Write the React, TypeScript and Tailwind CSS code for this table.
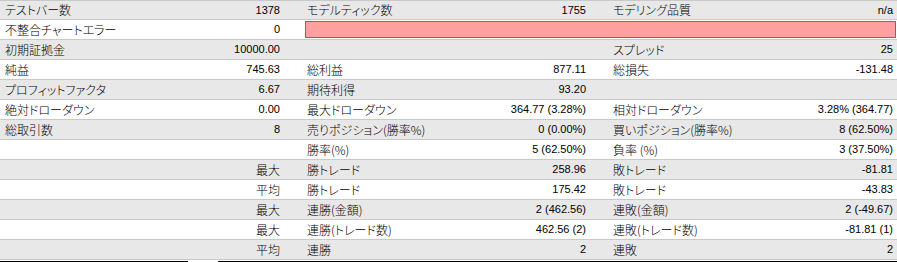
import React from "react";

type Row = {
  l1?: string;
  v1?: string;
  q?: string;
  l2?: string;
  v2?: string;
  l3?: string;
  v3?: string;
  pink?: boolean;
};

const rows: Row[] = [
  { l1: "テストバー数", v1: "1378", l2: "モデルティック数", v2: "1755", l3: "モデリング品質", v3: "n/a" },
  { l1: "不整合チャートエラー", v1: "0", pink: true },
  { l1: "初期証拠金", v1: "10000.00", l3: "スプレッド", v3: "25" },
  { l1: "純益", v1: "745.63", l2: "総利益", v2: "877.11", l3: "総損失", v3: "-131.48" },
  { l1: "プロフィットファクタ", v1: "6.67", l2: "期待利得", v2: "93.20" },
  { l1: "絶対ドローダウン", v1: "0.00", l2: "最大ドローダウン", v2: "364.77 (3.28%)", l3: "相対ドローダウン", v3: "3.28% (364.77)" },
  { l1: "総取引数", v1: "8", l2: "売りポジション(勝率%)", v2: "0 (0.00%)", l3: "買いポジション(勝率%)", v3: "8 (62.50%)" },
  { l2: "勝率(%)", v2: "5 (62.50%)", l3: "負率 (%)", v3: "3 (37.50%)" },
  { q: "最大", l2: "勝トレード", v2: "258.96", l3: "敗トレード", v3: "-81.81" },
  { q: "平均", l2: "勝トレード", v2: "175.42", l3: "敗トレード", v3: "-43.83" },
  { q: "最大", l2: "連勝(金額)", v2: "2 (462.56)", l3: "連敗(金額)", v3: "2 (-49.67)" },
  { q: "最大", l2: "連勝(トレード数)", v2: "462.56 (2)", l3: "連敗(トレード数)", v3: "-81.81 (1)" },
  { q: "平均", l2: "連勝", v2: "2", l3: "連敗", v3: "2" },
];

const jp = "font-['Noto_Sans_CJK_JP',sans-serif] font-light text-[12px] [font-feature-settings:'palt'] leading-none";
const num = "font-['Liberation_Sans','Noto_Sans_CJK_JP',sans-serif] text-[11px] leading-none";

function Cell({ label, value, qual, className }: { label?: string; value?: string; qual?: string; className: string }) {
  return (
    <div className={`flex items-center justify-between ${className}`}>
      <span className={jp}>{label}</span>
      {qual ? <span className={jp}>{qual}</span> : <span className={num}>{value}</span>}
    </div>
  );
}

export default function App() {
  return (
    <div className="w-[897px] h-[262px] bg-white text-black overflow-hidden">
      <div className="border-t border-[#c9c9c9]">
        {rows.map((r, i) => (
          <div
            key={i}
            className={`grid grid-cols-[302px_306px_1fr] border-b border-[#c9c9c9] ${
              i === 0 ? "h-[19px]" : "h-5"
            } ${i % 2 === 0 ? "bg-[#e8e8e8]" : "bg-white"}`}
          >
            <Cell label={r.l1} value={r.v1} qual={r.q} className="pl-[5px] pr-[22px]" />
            {r.pink ? (
              <div className="col-span-2 flex items-center pl-[3px] pr-px">
                <div className="h-[17px] w-full bg-[#ffa0a0] border border-[#3a7bc4]" />
              </div>
            ) : (
              <>
                <Cell label={r.l2} value={r.v2} className="pl-[5px] pr-[22px]" />
                <Cell label={r.l3} value={r.v3} className="pl-[5px] pr-1" />
              </>
            )}
          </div>
        ))}
      </div>
      <div className="mt-px flex h-px">
        <div className="w-[188px] bg-black" />
        <div className="w-[30px]" />
        <div className="flex-1 bg-black" />
      </div>
    </div>
  );
}
